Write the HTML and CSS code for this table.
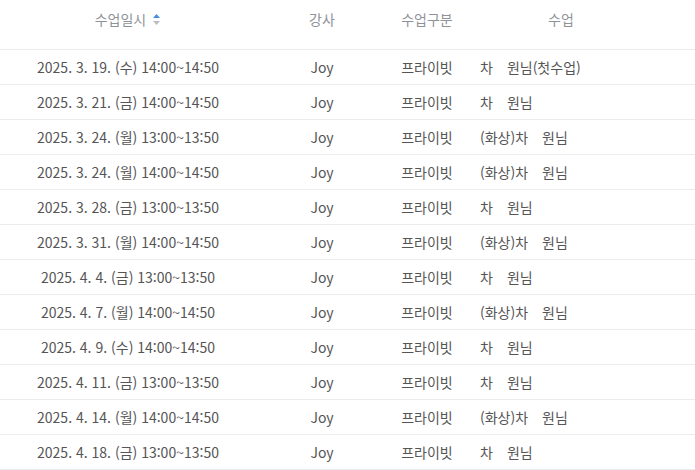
FILE: index.html
```html
<!DOCTYPE html>
<html lang="ko">
<head>
  <meta charset="UTF-8" />
  <title>수업 목록</title>
  <link rel="stylesheet" href="styles.css">
</head>
<body>
  <table class="lessons">
    <colgroup>
      <col class="col-date">
      <col class="col-teacher">
      <col class="col-type">
      <col class="col-class">
    </colgroup>
    <thead>
      <tr>
        <th class="sortable">수업일시<span class="sort">
            <svg width="9" height="13" viewBox="0 0 9 13">
              <path d="M1 5 L4.5 1 L8 5 Z" fill="#4a90e2"/>
              <path d="M1 8 L4.5 12 L8 8 Z" fill="#b9bcc2"/>
            </svg>
          </span></th>
        <th>강사</th>
        <th>수업구분</th>
        <th class="th-class">수업</th>
      </tr>
    </thead>
    <tbody>
      <tr><td>2025. 3. 19. (수) 14:00~14:50</td><td>Joy</td><td>프라이빗</td><td class="name">차　원님(첫수업)</td></tr>
      <tr><td>2025. 3. 21. (금) 14:00~14:50</td><td>Joy</td><td>프라이빗</td><td class="name">차　원님</td></tr>
      <tr><td>2025. 3. 24. (월) 13:00~13:50</td><td>Joy</td><td>프라이빗</td><td class="name">(화상)차　원님</td></tr>
      <tr><td>2025. 3. 24. (월) 14:00~14:50</td><td>Joy</td><td>프라이빗</td><td class="name">(화상)차　원님</td></tr>
      <tr><td>2025. 3. 28. (금) 13:00~13:50</td><td>Joy</td><td>프라이빗</td><td class="name">차　원님</td></tr>
      <tr><td>2025. 3. 31. (월) 14:00~14:50</td><td>Joy</td><td>프라이빗</td><td class="name">(화상)차　원님</td></tr>
      <tr><td>2025. 4. 4. (금) 13:00~13:50</td><td>Joy</td><td>프라이빗</td><td class="name">차　원님</td></tr>
      <tr><td>2025. 4. 7. (월) 14:00~14:50</td><td>Joy</td><td>프라이빗</td><td class="name">(화상)차　원님</td></tr>
      <tr><td>2025. 4. 9. (수) 14:00~14:50</td><td>Joy</td><td>프라이빗</td><td class="name">차　원님</td></tr>
      <tr><td>2025. 4. 11. (금) 13:00~13:50</td><td>Joy</td><td>프라이빗</td><td class="name">차　원님</td></tr>
      <tr><td>2025. 4. 14. (월) 14:00~14:50</td><td>Joy</td><td>프라이빗</td><td class="name">(화상)차　원님</td></tr>
      <tr><td>2025. 4. 18. (금) 13:00~13:50</td><td>Joy</td><td>프라이빗</td><td class="name">차　원님</td></tr>
    </tbody>
  </table>
</body>
</html>
```

FILE: styles.css
```css
body {
  margin: 0;
  padding: 0;
  background: #ffffff;
  font-family: "Noto Sans CJK KR", "Noto Sans", sans-serif;
  font-size: 14px;
}
.lessons {
  width: 695px;
  border-collapse: collapse;
  table-layout: fixed;
}
.col-date { width: 256px; }
.col-teacher { width: 132px; }
.col-type { width: 78px; }
th {
  font-weight: normal;
  color: #8f9399;
  height: 49px;
  padding: 8px 0 19px 0;
  line-height: 22px;
  text-align: center;
  vertical-align: top;
  border-bottom: 1px solid #ebebf0;
  box-sizing: border-box;
  white-space: nowrap;
}
.sort {
  display: inline-block;
  vertical-align: -1px;
  margin-left: 6px;
}
.sort svg {
  display: block;
}
.th-class {
  text-align: left;
  padding-left: 82px;
}
td {
  color: #555555;
  height: 34px;
  padding: 0;
  line-height: 20px;
  text-align: center;
  border-bottom: 1px solid #ebebf0;
  white-space: nowrap;
}
td.name {
  text-align: left;
  padding-left: 14px;
}
```
